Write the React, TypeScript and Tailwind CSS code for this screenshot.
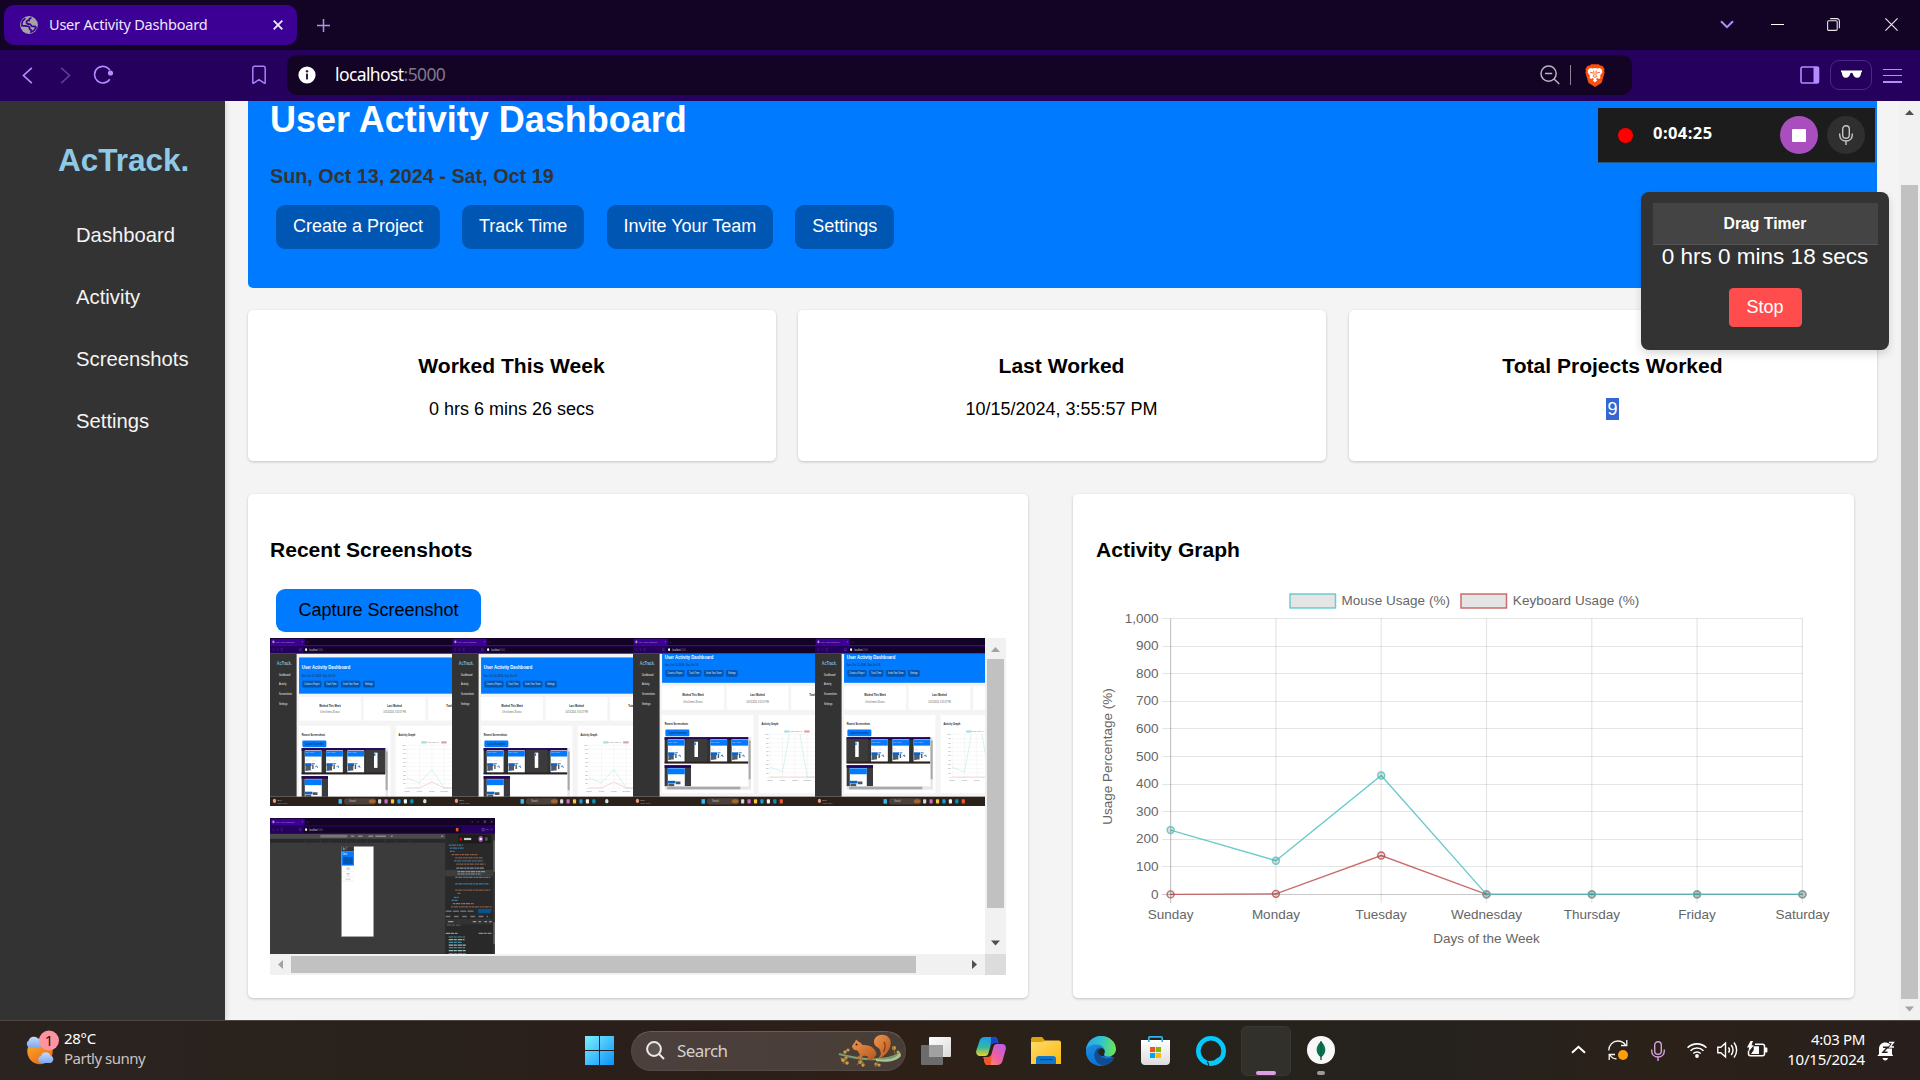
import React from "react";

const ui = "font-['Noto_Sans','Open_Sans',sans-serif]";

/* ---------- Browser chrome ---------- */

function TabStrip() {
  return (
    <div className="flex h-[50px] items-center bg-[#130425] pl-1">
      <div className="flex h-10 w-[293px] items-center rounded-[10px] bg-[#3d0095] pl-4 pr-[14px]">
        <svg width="18" height="18" viewBox="0 0 18 18">
          <circle cx="9" cy="9" r="8.900" fill="#a3a3a6" />
          <path d="M11.500 2.200C9.500 2 8.800 3.400 9 4.500c-1.500-.3-2.800.7-2.500 2 .3 1.500 1.500 1.600 3 1.600 1 0 1.500.6 1.700 1.500.3 1 1.300 1 2.300.8 1.200-.2 2 .1 2.600.8-.8 2.200-2.500 4-5 4.700.4-1.600-.1-2.600-1.400-2.800.2-1.900-.8-2.900-2.500-3L2 9.600C1.500 6.500 3 3.700 5.500 2.500" fill="none" stroke="#3d0095" strokeWidth="1.700" />
        </svg>
        <span className={`${ui} -mt-[2px] ml-[11px] text-[14.5px] leading-5 tracking-[-0.21px] text-[#efe6ff] whitespace-nowrap`}>User Activity Dashboard</span>
        <svg className="ml-auto" width="10" height="10" viewBox="0 0 10 10" stroke="#f1eaff" strokeWidth="1.800">
          <path d="M.7.7l8.600 8.600M9.300.7L.7 9.300" />
        </svg>
      </div>
      <svg className="ml-5" width="13" height="13" viewBox="0 0 13 13" stroke="#b294e6" strokeWidth="1.500">
        <path d="M6.500 0v13M0 6.500h13" />
      </svg>
      <div className="-mt-px ml-auto flex items-center pr-[22px]">
        <svg width="14" height="9" viewBox="0 0 14 9" fill="none" stroke="#b38cff" strokeWidth="2">
          <path d="M1 1.200l6 6 6-6" />
        </svg>
        <div className="ml-[37px] h-px w-[13px] bg-white" />
        <svg className="ml-[43px]" width="13" height="13" viewBox="0 0 13 13" fill="none" stroke="#e8e4ec" strokeWidth="1.100">
          <rect x=".6" y="2.800" width="9.600" height="9.600" rx="1.200" />
          <path d="M3 .9C3.300.6 3.600.6 4 .6h6a2.400 2.400 0 0 1 2.400 2.400v6.200c0 .4 0 .6-.4 1" />
        </svg>
        <svg className="ml-[45px]" width="13" height="13" viewBox="0 0 13 13" stroke="#e8e4ec" strokeWidth="1.200">
          <path d="M.4.4l12.200 12.200M12.600.4L.4 12.600" />
        </svg>
      </div>
    </div>
  );
}

function BraveLion() {
  return (
    <svg width="20" height="23" viewBox="0 0 20 23">
      <path d="M5 1.500L6.200.3h7.600L15 1.500l2.300.2L19.600 5l-.5 2 .5 1.500-2.500 8.700c-.4 1.400-1 2-2.300 2.900L10 23l-4.800-2.900c-1.300-.9-1.900-1.500-2.300-2.900L.4 8.500.9 7 .4 5l2.300-3.300z" fill="#fb4f0a" />
      <path d="M3 5.800L5.200 4l2.300.6L10 4.100l2.500.5 2.300-.6L17 5.800l.3 2.400-2.200 3.400.4 2-1.300 1.400-2.300-1-.6 1.700.9.800L10 18.400l-2.200-1.900.9-.8-.6-1.700-2.300 1-1.300-1.400.4-2L2.700 8.200z" fill="#fff" />
      <path d="M5 8.200l3 .8M15 8.200l-3 .8M8.700 6.500l.4 4.500-.9 1.500L10 13.400l1.800-.9-.9-1.500.4-4.500" fill="none" stroke="#fb4f0a" strokeWidth=".9" />
    </svg>
  );
}

function Toolbar() {
  return (
    <div className="flex h-[51px] items-center bg-[#25005c] pl-[22px] pr-[18px]">
      <svg className="-mt-px" width="11" height="17" viewBox="0 0 11 17" fill="none" stroke="#b38cff" strokeWidth="1.700"><path d="M9.800.8L1.500 8.500l8.300 7.700" /></svg>
      <svg className="-mt-px ml-[27px]" width="11" height="17" viewBox="0 0 11 17" fill="none" stroke="#5f3a99" strokeWidth="1.700"><path d="M1.200.8l8.300 7.700-8.300 7.700" /></svg>
      <svg className="-mt-[2px] ml-[22px]" width="21" height="20" viewBox="0 0 21 20">
        <path d="M16.800 14.200A8.300 8.300 0 1 1 17 5.400" fill="none" stroke="#b38cff" strokeWidth="1.600" />
        <circle cx="17.500" cy="8" r="2.600" fill="#b38cff" />
      </svg>
      <svg className="-mt-[2px] ml-[137px]" width="16" height="20" viewBox="0 0 16 20" fill="none" stroke="#a883f5" strokeWidth="1.500"><path d="M1.800 17.800V3c0-1 .7-1.700 1.700-1.700h9c1 0 1.700.7 1.700 1.700v14.800c0 .5-.5.7-.9.4L8 14.600l-5.300 3.600c-.4.300-.9.100-.9-.4z" /></svg>
      <div className="-mt-px ml-[20px] flex h-10 w-[1345px] items-center rounded-[10px] bg-[#130425] pl-[11px] pr-[27px]">
        <svg width="18" height="18" viewBox="0 0 18 18"><circle cx="9" cy="9" r="8.600" fill="#fff" /><circle cx="9" cy="5.300" r="1.200" fill="#2c2140" /><rect x="8" y="7.600" width="2" height="5.800" fill="#2c2140" /></svg>
        <span className={`${ui} -mt-[3px] ml-[19px] text-[17.5px] leading-6 tracking-[-0.6px] text-white`}>localhost<span className="text-[#7f788c]">:5000</span></span>
        <svg className="-mt-px ml-auto" width="20" height="20" viewBox="0 0 20 20" fill="none" stroke="#b9b4c0" strokeWidth="1.500"><circle cx="8.600" cy="8.600" r="7.600" /><path d="M5 8.600h7.200M14 14l5.300 5" /></svg>
        <div className="ml-[10px] h-5 w-px bg-[#8a8496]" />
        <div className="ml-[14px]"><BraveLion /></div>
      </div>
      <svg className="-mt-px ml-auto" width="20" height="18" viewBox="0 0 20 18"><rect x="1" y="1" width="17.500" height="16" rx="1.500" fill="none" stroke="#b38cff" strokeWidth="1.600" /><rect x="13.500" y="1" width="5.500" height="16" fill="#b38cff" /></svg>
      <div className="-mt-px ml-[10px] flex h-[30px] w-[42px] items-center justify-center rounded-[9px] border border-[#4b2a86]">
        <svg className="-mt-px" width="21" height="9" viewBox="0 0 21 9" fill="#fff"><path d="M0 .4h21v1.800h-.8c-.2 3.500-1.300 5.600-4 5.600-2.600 0-3.800-1.800-4.600-4.600-.2-.7-2-.7-2.200 0C8.600 6 7.400 7.800 4.800 7.800c-2.700 0-3.800-2.100-4-5.600H0z" /></svg>
      </div>
      <div className="ml-[11px] flex h-[14px] w-[19px] flex-col justify-between"><i className="h-[1.5px] bg-[#b38cff]" /><i className="h-[1.5px] bg-[#b38cff]" /><i className="h-[1.5px] bg-[#b38cff]" /></div>
    </div>
  );
}

/* ---------- Chart ---------- */

const days = ["Sunday", "Monday", "Tuesday", "Wednesday", "Thursday", "Friday", "Saturday"];
const mouse = [233, 122, 431, 0, 0, 0, 0];
const keys = [0, 2, 141, 0, 0, 0, 0];
const px = (i: number) => 1170.6 + i * 105.3;
const py = (v: number) => 894.4 - v * 0.276;
const points = (d: number[]) => d.map((v, i) => `${px(i)},${py(v)}`).join(" ");

function ActivityChart() {
  const ticks = [0, 100, 200, 300, 400, 500, 600, 700, 800, 900, 1000];
  return (
    <svg width="736" height="375" viewBox="1096 585 736 375" fontFamily="Liberation Sans, Arial, sans-serif" fontSize="13.5" fill="#666">
      {ticks.map((t) => (
        <g key={t}>
          <path d={`M1162 ${Math.floor(py(t)) + 0.5}H1802.500`} stroke="#000" strokeOpacity={t === 0 ? 0.22 : 0.1} strokeWidth="1.200" />
          <text x="1158.500" y={py(t) + 4.1} textAnchor="end">{t.toLocaleString("en-US")}</text>
        </g>
      ))}
      {days.map((d, i) => (
        <g key={d}>
          <path d={`M${px(i)} 618.500V903`} stroke="#000" strokeOpacity={i === 0 ? 0.22 : 0.1} strokeWidth="1.200" />
          <text x={px(i)} y="918.500" textAnchor="middle">{d}</text>
        </g>
      ))}
      {[{ d: keys, c: "#c04b4b" }, { d: mouse, c: "#4bc0c0" }].map(({ d, c }) => (
        <g key={c} stroke={c} strokeWidth="1.400" strokeOpacity=".82" fill="none">
          <polyline points={points(d)} />
          {d.map((v, i) => <circle key={i} cx={px(i)} cy={py(v)} r="3.500" fill="#000" fillOpacity=".12" />)}
        </g>
      ))}
      <rect x="1290" y="594" width="45.500" height="14" fill="#e5e5e5" stroke="#4bc0c0" strokeOpacity=".8" strokeWidth="1.500" />
      <text x="1341.500" y="605" textLength="108.500">Mouse Usage (%)</text>
      <rect x="1461" y="594" width="45.500" height="14" fill="#e5e5e5" stroke="#c04b4b" strokeOpacity=".8" strokeWidth="1.500" />
      <text x="1512.800" y="605" textLength="126.500">Keyboard Usage (%)</text>
      <text x="1486.500" y="942.500" textAnchor="middle">Days of the Week</text>
      <text transform="translate(1112 756.500) rotate(-90)" textAnchor="middle">Usage Percentage (%)</text>
    </svg>
  );
}

/* ---------- Captured screenshot thumbnails ---------- */

function ThumbChrome() {
  return (
    <g>
      <rect width="1920" height="50" fill="#130425" />
      <rect y="48" width="1920" height="53" fill="#25005c" />
      <rect x="4" y="5" width="293" height="42" rx="8" fill="#3d0095" />
      <rect x="288" y="56" width="1345" height="39" rx="8" fill="#130425" />
      <circle cx="29" cy="25" r="9" fill="#a3a3a6" />
      <text x="49" y="31" fontSize="16" fill="#c9b5ee" opacity=".75" textLength="158">User Activity Dashboard</text>
      <text x="272" y="31" fontSize="18" fill="#ddd" opacity=".8">×</text>
      <text x="316" y="32" fontSize="20" fill="#a58bd0" opacity=".7">+</text>
      <path d="M31 66l-7 9 7 9M60 66l7 9-7 9M109 68a9 9 0 1 0 0 14M253 66h12v18l-6-5-6 5z" fill="none" stroke="#8660cc" strokeWidth="2" />
      <circle cx="308" cy="75" r="9" fill="#fff" />
      <text x="336" y="81" fontSize="18" fill="#ddd">localhost<tspan fill="#776a8a">:5000</tspan></text>
    </g>
  );
}

function ThumbTaskbar({ extra }: { extra: string }) {
  const icons = ["#d8d8d8", "#c86bc8", "#f8c43a", "#1c9bd8", "#f2f2f2", "#0b91ac", extra];
  return (
    <g>
      <rect y="1020" width="1920" height="60" fill="#2a211b" />
      <circle cx="38" cy="1047" r="14" fill="#eb9a83" />
      <text x="64" y="1046" fontSize="16" fill="#ccc">28°C</text>
      <text x="64" y="1066" fontSize="16" fill="#999">Partly sunny</text>
      <rect x="585" y="1036" width="29" height="29" fill="#38bdf8" />
      <rect x="631" y="1030" width="275" height="40" rx="20" fill="#4b403a" />
      <text x="677" y="1056" fontSize="18" fill="#ccc">Search</text>
      <ellipse cx="872" cy="1050" rx="29" ry="13" fill="#a7652e" />
      {icons.map((c, i) => <rect key={i} x={922 + i * 55} y="1037" width="27" height="27" rx="6" fill={c} />)}
      {extra === "#2a211b" && <circle cx="1321" cy="1049" r="14" fill="#d5e5df" />}
    </g>
  );
}

type Cell = "dash" | "dark";

function MiniGallery({ cells }: { cells: Cell[] }) {
  return (
    <g>
      <rect x="270" y="638" width="715" height="168" fill="#333" />
      <rect x="270" y="638" width="715" height="16" fill="#25005c" />
      {cells.map((c, i) =>
        c === "dash" ? (
          <g key={i} transform={`translate(${270 + i * 181.5} 0)`}>
            <rect x="27" y="652" width="143" height="143" fill="#fff" />
            <rect x="27" y="656" width="143" height="36" fill="#007bff" />
            <text x="31" y="672" fontSize="14" fill="#fff" opacity=".7">User Activity</text>
            <rect x="30" y="735" width="54" height="18" fill="#0864c8" />
            <path d="M32 752h46v29h-46zM90 744h12v28h-12z" fill="#515966" />
            <path d="M30 780h24M88 738h25M116 760l12-9 8 14" stroke="#0864c8" strokeWidth="6" fill="none" />
            <path d="M33 719h34M88 719h36M33 712h24" stroke="#ddd" strokeWidth="4" />
          </g>
        ) : (
          <g key={i}>
            <rect x={270 + i * 181.5} y="648" width="181.5" height="148" fill="#3b3b3b" />
            <rect x={343 + i * 181.5} y="667" width="30" height="98" fill="#fff" />
            <rect x={343 + i * 181.5} y="672" width="12" height="16" fill="#007bff" />
          </g>
        )
      )}
      <rect x="270" y="795" width="715" height="11" fill="#2a211b" />
      <rect x="270" y="818" width="225" height="136" fill="#3a3b40" />
      <rect x="270" y="818" width="225" height="16" fill="#25005c" />
      <rect x="297" y="836" width="145" height="118" fill="#fff" />
      <rect x="297" y="838" width="145" height="38" fill="#007bff" />
      <rect x="298" y="918" width="64" height="16" fill="#0864c8" />
      <path d="M302 936h50v18h-50zM365 922h40v18h-40z" fill="#4c5868" />
      <rect x="985" y="638" width="21" height="337" fill="#e7e7e7" />
      <rect x="987" y="659" width="17" height="249" fill="#a9a9a9" />
      <rect x="270" y="954" width="715" height="21" fill="#e7e7e7" />
      <rect x="291" y="956" width="625" height="17" fill="#a9a9a9" />
    </g>
  );
}

function DashboardThumb({ shift, cells, peak, extra }: { shift: number; cells: Cell[]; peak: boolean; extra: string }) {
  const top = [233, 122, 1700, 0, 0, 0, 0];
  const id = `page-${shift}-${cells.join("")}`;
  const buttons: [number, number, string][] = [[276, 163, "Create a Project"], [461, 122, "Track Time"], [605, 167, "Invite Your Team"], [794, 99, "Settings"]];
  return (
    <svg className="block h-[168px] w-[225px] max-w-none shrink-0" viewBox="0 0 1920 1080" preserveAspectRatio="none" fontFamily="Liberation Sans, Arial, sans-serif">
      <defs>
        <clipPath id={id}><rect y="101" width="1920" height="919" /></clipPath>
        <clipPath id={`${id}-plot`}><rect x="1160" y="617" width="660" height="290" /></clipPath>
      </defs>
      <rect width="1920" height="1080" fill="#f4f4f4" />
      <rect y="101" width="227" height="919" fill="#333" />
      <text x="58" y="171" fontSize="31" fontWeight="bold" fill="#8ecae6" opacity=".85">AcTrack.</text>
      {["Dashboard", "Activity", "Screenshots", "Settings"].map((t, i) => <text key={t} x="76" y={242 + i * 62} fontSize="20" fill="#eee">{t}</text>)}
      <g clipPath={`url(#${id})`}>
        <g transform={`translate(0 ${shift})`}>
          <rect x="248" y="55" width="1672" height="233" fill="#007bff" />
          <text x="270" y="132" fontSize="36" fontWeight="bold" fill="#fff">User Activity Dashboard</text>
          <text x="270" y="183" fontSize="20" fontWeight="bold" fill="#234" opacity=".8">Sun, Oct 13, 2024 - Sat, Oct 19</text>
          {buttons.map(([x, w, t]) => (
            <g key={t}>
              <rect x={x} y="205" width={w} height="44" rx="9" fill="#0056b3" />
              <text x={x + w / 2} y="232" fontSize="18" textAnchor="middle" fill="#fff" opacity=".85">{t}</text>
            </g>
          ))}
          {[["Worked This Week", "0 hrs 6 mins 26 secs"], ["Last Worked", "10/15/2024, 3:55:57 PM"], ["Total Projects Worked", "9"]].map(([a, b], i) => (
            <g key={a} textAnchor="middle">
              <rect x={248 + i * 550.5} y="310" width="528" height="151" fill="#fff" />
              <text x={512 + i * 550.5} y="373" fontSize="21" fontWeight="bold" fill="#222">{a}</text>
              <text x={512 + i * 550.5} y="415" fontSize="18" fill="#555">{b}</text>
            </g>
          ))}
          <rect x="248" y="494" width="780" height="504" fill="#fff" />
          <rect x="1073" y="494" width="781" height="504" fill="#fff" />
          <text x="270" y="557" fontSize="21" fontWeight="bold" fill="#222">Recent Screenshots</text>
          <text x="1096" y="557" fontSize="21" fontWeight="bold" fill="#222">Activity Graph</text>
          <rect x="276" y="589" width="205" height="43" rx="9" fill="#007bff" />
          <text x="299" y="616" fontSize="18" fill="#123">Capture Screenshot</text>
          <MiniGallery cells={cells} />
          <path d={Array.from({ length: 11 }, (_, i) => `M1162 ${py(i * 100)}H1802`).join("") + days.map((_, i) => `M${px(i)} 618V903`).join("")} stroke="#dcdcdc" strokeWidth="1.500" />
          {days.map((d, i) => <text key={d} x={px(i)} y="919" fontSize="13" textAnchor="middle" fill="#777">{d}</text>)}
          {Array.from({ length: 11 }, (_, i) => <text key={i} x="1158" y={py(i * 100) + 5} fontSize="13" textAnchor="end" fill="#777">{i * 100}</text>)}
          <g clipPath={`url(#${id}-plot)`} fill="none" strokeWidth="3">
            <polyline points={points(peak ? keys : [0, 0, 0, 0, 0, 0, 0])} stroke="#e3a0a0" />
            <polyline points={points(peak ? mouse : top)} stroke="#a2dede" />
          </g>
          <rect x="1290" y="594" width="46" height="14" fill="#a4dede" />
          <rect x="1461" y="594" width="46" height="14" fill="#dfa0a0" />
          <text x="1341" y="606" fontSize="13" fill="#777">Mouse Usage (%)</text>
        </g>
      </g>
      <ThumbChrome />
      <ThumbTaskbar extra={extra} />
    </svg>
  );
}

function DevtoolsThumb() {
  const rows: [number, number, number, string][] = [
    [218, 1525, 120, "#3f77a8"], [242, 1535, 120, "#3f77a8"], [268, 1535, 40, "#3f77a8"], [295, 1550, 220, "#8c5a45"], [320, 1580, 240, "#8c5a45"], [345, 1570, 250, "#4a6f90"],
    [370, 1590, 250, "#8c5a45"], [402, 1590, 240, "#7890a5"], [430, 1600, 240, "#8a8f99"], [450, 1600, 200, "#8a8f99"], [477, 1580, 300, "#4a78a0"], [530, 1580, 290, "#3f77a8"],
    [580, 1580, 300, "#8c5a45"], [605, 1600, 30, "#3f77a8"], [637, 1570, 40, "#3f77a8"], [662, 1550, 50, "#3f77a8"], [688, 1560, 180, "#777"], [714, 1545, 350, "#8c5a45"],
    [740, 1780, 110, "#2f80c0"],
  ];
  const styles: [number, number, number, string][] = [
    [832, 1510, 120, "#555"], [884, 1500, 100, "#999"], [884, 1780, 110, "#888"], [908, 1525, 140, "#35919e"], [925, 1525, 135, "#a0a8aa"],
    [943, 1525, 110, "#35919e"], [960, 1525, 150, "#99bbbb"], [977, 1525, 140, "#35919e"], [995, 1525, 150, "#99bbbb"], [1015, 1525, 150, "#35919e"], [1034, 1525, 150, "#35919e"],
  ];
  return (
    <svg className="block h-[168px] w-[225px] max-w-none shrink-0" viewBox="0 0 1920 1080" preserveAspectRatio="none" fontFamily="Liberation Sans, Arial, sans-serif">
      <rect width="1920" height="1080" fill="#3b3b3b" />
      <rect y="101" width="1495" height="33" fill="#4a4a4a" />
      <rect y="134" width="1495" height="25" fill="#292929" />
      <rect x="430" y="108" width="230" height="18" fill="#777" />
      <path d="M690 117h30M750 117h40M840 117h40M900 117h90M1030 117h18M1460 117h18" stroke="#888" strokeWidth="9" />
      <path d="M300 134v25M430 134v25M510 134v25M610 134v25M650 134v25M740 134v25M830 134v25M980 134v25M1070 134v25M1195 134v25" stroke="#484848" strokeWidth="3" />
      <rect x="611" y="184" width="272" height="578" fill="#fff" stroke="#aaa" strokeWidth="4" />
      <rect x="609" y="181" width="107" height="32" fill="#333" />
      <text x="620" y="206" fontSize="22" fill="#8ecae6">AcT</text>
      <rect x="612" y="213" width="104" height="93" fill="#007bff" />
      <text x="618" y="240" fontSize="20" fill="#fff">User</text>
      <rect x="624" y="250" width="82" height="48" fill="#0056b3" />
      <path d="M650 322h34M655 330h24M652 357h30M655 367h22M645 393h44" stroke="#777" strokeWidth="3" />
      <path d="M615 342h100M615 378h100M615 406h100" stroke="#ddd" strokeWidth="3" />
      <rect x="1495" y="101" width="425" height="979" fill="#292929" />
      <rect x="1495" y="333" width="410" height="42" fill="#3d3d3d" />
      {rows.map(([y, x, w, c], i) => <path key={i} d={`M${x} ${y * 0.8}h${w}`} stroke={c} strokeWidth="8" strokeDasharray="22 5 34 7 15 4" />)}
      <path d="M1500 600h240" stroke="#5f6f80" strokeWidth="10" strokeDasharray="50 12" />
      <rect x="1775" y="586" width="110" height="26" fill="#08548c" />
      <path d="M1500 633h360" stroke="#777" strokeWidth="9" strokeDasharray="40 30" />
      <rect x="1500" y="648" width="400" height="36" fill="#333" />
      <path d="M1520 666h45M1730 666h30M1780 666h20M1830 666h22M1870 666h22" stroke="#999" strokeWidth="9" />
      {styles.map(([y, x, w, c], i) => <path key={i} d={`M${x} ${y - 143}h${w}`} stroke={c} strokeWidth="8" strokeDasharray="40 5 24 7" />)}
      <rect x="1608" y="108" width="277" height="54" fill="#1c1c1c" />
      <circle cx="1628" cy="135" r="10" fill="red" />
      <rect x="1655" y="128" width="62" height="14" fill="#ccc" />
      <circle cx="1798" cy="135" r="19" fill="#a94ebf" /><rect x="1789" y="128" width="18" height="14" fill="#fff" />
      <circle cx="1846" cy="135" r="13" fill="#555" />
      <rect x="1906" y="101" width="14" height="979" fill="#3a3a3a" />
      <rect x="1906" y="145" width="14" height="200" fill="#666" />
      <rect x="1906" y="670" width="14" height="140" fill="#666" />
      <ThumbChrome />
      <path d="M1720 25h12M1771 25h13M1827 18h12v12h-12zM1885 18l12 12m0-12l-12 12M1810 67h18v16h-18zM1840 75h26M1883 75h15" stroke="#8660cc" strokeWidth="4" fill="none" />
      <rect x="1586" y="64" width="22" height="22" fill="#e85b29" />
    </svg>
  );
}

/* ---------- Page ---------- */

function Arrow({ dir, muted }: { dir: "up" | "down" | "left" | "right"; muted?: boolean }) {
  const d = { up: "M6 14l4.500-5 4.500 5z", down: "M6 7.500l4.500 5 4.500-5z", left: "M13 6L8 10.500l5 4.500z", right: "M8 6l5 4.500L8 15z" }[dir];
  return <svg className="block shrink-0" width="21" height="21" viewBox="0 0 21 21" fill={muted ? "#a3a3a3" : "#505050"}><path d={d} /></svg>;
}

function Sidebar() {
  return (
    <aside className="z-10 w-[225px] shrink-0 bg-[#333] shadow-[2px_0_5px_rgba(0,0,0,0.1)]">
      <div className="mt-[41px] pl-[58px] text-[31.5px] leading-9 font-bold text-[#8ecae6]">AcTrack.</div>
      <nav className="mt-[26px] flex flex-col pl-[76px] text-[20.25px] text-[#f4f4f4]">
        <a className="flex h-[62px] items-center">Dashboard</a>
        <a className="flex h-[62px] items-center">Activity</a>
        <a className="flex h-[62px] items-center">Screenshots</a>
        <a className="flex h-[63px] items-center">Settings</a>
      </nav>
    </aside>
  );
}

function HeaderButton({ children }: { children: React.ReactNode }) {
  return <button className="h-[44px] rounded-[9px] bg-[#0056b3] px-[16.9px] pb-[3px] text-[18px] leading-5 whitespace-nowrap text-white">{children}</button>;
}

function StatCard({ title, children }: { title: string; children: React.ReactNode }) {
  return (
    <div className="h-[151px] w-[528px] rounded-[5px] bg-white pt-[44px] pr-px text-center shadow-[0_1px_3px_rgba(0,0,0,0.2)]">
      <h3 className="text-[21.06px] leading-6 font-bold">{title}</h3>
      <p className="mt-[21px] text-[18px] leading-5">{children}</p>
    </div>
  );
}

function Gallery() {
  return (
    <div className="mt-[6px] grid w-[736px] grid-cols-[715px_21px] grid-rows-[316px_21px]">
      <div className="overflow-hidden">
        <div className="flex">
          <div className="w-[182px] shrink-0 overflow-hidden"><DashboardThumb shift={70} cells={["dash", "dash", "dash", "dark"]} peak extra="#2a211b" /></div>
          <div className="w-[181px] shrink-0 overflow-hidden"><DashboardThumb shift={70} cells={["dash", "dash", "dark", "dash"]} peak extra="#2a211b" /></div>
          <div className="w-[182px] shrink-0 overflow-hidden"><DashboardThumb shift={0} cells={["dash", "dark", "dash", "dash"]} peak={false} extra="#ee5730" /></div>
          <div className="w-[170px] shrink-0 overflow-hidden"><DashboardThumb shift={0} cells={["dark", "dash", "dash", "dash"]} peak={false} extra="#ee5730" /></div>
        </div>
        <div className="mt-3"><DevtoolsThumb /></div>
      </div>
      <div className="flex flex-col items-center bg-[#f1f1f1]">
        <Arrow dir="up" muted />
        <div className="h-[249px] w-[17px] bg-[#c1c1c1]" />
        <div className="mt-auto"><Arrow dir="down" /></div>
      </div>
      <div className="flex items-center bg-[#f1f1f1]">
        <Arrow dir="left" muted />
        <div className="h-[17px] w-[625px] bg-[#c1c1c1]" />
        <div className="ml-auto"><Arrow dir="right" /></div>
      </div>
      <div className="bg-[#dcdcdc]" />
    </div>
  );
}

function Page() {
  return (
    <div className="flex h-[919px] overflow-hidden bg-[#f4f4f4] text-black">
      <Sidebar />
      <main className="flex w-[1674px] shrink-0 flex-col pl-[23px]">
        <header className="h-[187px] w-[1629px] rounded-b-[5px] bg-[#007bff] pt-px pl-[22px]">
          <h1 className="text-[36px] leading-9 font-bold text-white">User Activity Dashboard</h1>
          <p className="mt-[26px] text-[19.8px] leading-6 font-bold text-[#333]">Sun, Oct 13, 2024 - Sat, Oct 19</p>
          <div className="mt-[17px] ml-[6px] flex gap-[22.3px]">
            <HeaderButton>Create a Project</HeaderButton>
            <HeaderButton>Track Time</HeaderButton>
            <HeaderButton>Invite Your Team</HeaderButton>
            <HeaderButton>Settings</HeaderButton>
          </div>
        </header>
        <section className="mt-[22px] flex w-[1629px] gap-[22px]">
          <StatCard title="Worked This Week">0 hrs 6 mins 26 secs</StatCard>
          <StatCard title="Last Worked">10/15/2024, 3:55:57 PM</StatCard>
          <div className="ml-px"><StatCard title="Total Projects Worked"><span className="bg-[#3367d1] px-px py-px text-white">9</span></StatCard></div>
        </section>
        <section className="mt-[33px] flex gap-[45px]">
          <div className="h-[504px] w-[780px] rounded-[5px] bg-white pt-[44px] pl-[22px] shadow-[0_1px_3px_rgba(0,0,0,0.2)]">
            <h3 className="text-[21.06px] leading-6 font-bold">Recent Screenshots</h3>
            <button className="mt-[27px] ml-[6px] block h-[43px] w-[205px] rounded-[9px] bg-[#007bff] pb-px text-[18px] leading-5">Capture Screenshot</button>
            <Gallery />
          </div>
          <div className="h-[504px] w-[781px] rounded-[5px] bg-white pt-[44px] pl-[23px] shadow-[0_1px_3px_rgba(0,0,0,0.2)]">
            <h3 className="mb-[23px] text-[21.06px] leading-6 font-bold">Activity Graph</h3>
            <ActivityChart />
          </div>
        </section>
      </main>
      <div className="flex w-[21px] shrink-0 flex-col items-center bg-[#f1f1f1]">
        <Arrow dir="up" />
        <div className="mt-[63px] h-[814px] w-[17px] bg-[#c1c1c1]" />
        <div className="mt-auto"><Arrow dir="down" muted /></div>
      </div>
    </div>
  );
}

function MicIcon({ color, width, height }: { color: string; width: number; height: number }) {
  return (
    <svg width={width} height={height} viewBox="0 0 14 20" fill="none" stroke={color} strokeWidth="1.400">
      <rect x="3.700" y=".8" width="6.600" height="12.400" rx="3.300" />
      <path d="M.7 8.500v1.200c0 3.800 2.600 6.300 6.300 6.300s6.300-2.500 6.300-6.300V8.500M7 16v4" />
    </svg>
  );
}

function Recorder() {
  return (
    <div className="absolute top-[108px] left-[1598px] z-20 flex h-[55px] w-[277px] items-center border-b border-[#27557f] bg-[#1c1c1c] pl-[20px]">
      <div className="h-[15px] w-[15px] rounded-full bg-[#f00]" />
      <span className={`${ui} -mt-[3px] ml-[20px] w-[62px] text-[16.5px] tracking-[0.45px] font-bold text-white`}>0:04:25</span>
      <div className="ml-[65px] flex h-[38px] w-[38px] items-center justify-center rounded-full bg-[#a94ebf]"><div className="h-[13px] w-[14px] rounded-[1px] bg-white" /></div>
      <div className="ml-[9px] flex h-[38px] w-[38px] items-center justify-center rounded-full bg-[#2f2f2f]"><MicIcon color="#c9c9c9" width={14} height={20} /></div>
    </div>
  );
}

function DragTimer() {
  return (
    <div className="absolute top-[192px] left-[1641px] z-20 flex h-[158px] w-[248px] flex-col items-center rounded-[8px] bg-[#333] pt-[11px] text-white shadow-[0_4px_9px_rgba(0,0,0,0.15)]">
      <div className="flex h-[42px] w-[225px] items-center justify-center border-b border-[#555] bg-[#444] text-[15.75px] leading-5 font-bold">Drag Timer</div>
      <div className="text-[22.5px] leading-6 whitespace-nowrap">0 hrs 0 mins 18 secs</div>
      <button className="mt-[19px] h-[39px] w-[73px] rounded-[4.5px] bg-[#ff4d4d] pb-[2px] text-[18px] leading-5">Stop</button>
    </div>
  );
}

/* ---------- Taskbar ---------- */

function Squirrel() {
  return (
    <svg width="64" height="34" viewBox="0 0 64 34">
      <defs><linearGradient id="fur" x1="0" y1="0" x2="1" y2="1"><stop offset="0" stopColor="#f0964e" /><stop offset="1" stopColor="#b4561d" /></linearGradient></defs>
      <path d="M1 20c14 4 24 6 38 5 9-.5 15-1 23-6" fill="none" stroke="#7f9a6c" strokeWidth="2" />
      <path d="M38 25c10 1 20 0 24-7l1 4c-4 5-14 7-25 5z" fill="#a8c493" />
      <g fill="#c9a044"><circle cx="7" cy="18" r="1.700" /><circle cx="10" cy="16" r="1.600" /><circle cx="5" cy="26" r="2" /><circle cx="9" cy="29" r="1.800" /><circle cx="8" cy="24" r="1.600" /><circle cx="22" cy="28" r="2" /><circle cx="25" cy="31" r="1.700" /><circle cx="38" cy="30" r="1.600" /><circle cx="41" cy="31" r="1.600" /><circle cx="56" cy="14" r="2" /><circle cx="60" cy="18" r="1.500" /></g>
      <path d="M2 24l6 1M5 30l4-6M19 31l4-6 4 7M37 33l3-6M55 12l2 8" stroke="#a0702c" strokeWidth="1" fill="none" />
      <path d="M37 25c5-1 7-4 5-9-1-3-6-3-6-8C36 3 41 0 46 1c6 1 8 7 6 12-2 6-8 12-15 12z" fill="url(#fur)" />
      <path d="M46 8c2 3 1 7-.5 10" stroke="#8c3c12" strokeWidth="1.300" fill="none" />
      <path d="M14 12.500c.5-2 2-3 3-4.500l1-2.500 2.300 2c2 .8 3.200 2 4.200 3.500 6 0 9 1 11.500 4 3 3.500 3 6 1 7.500l-3 3.500h-5l1-3.500-4-1-4 3-3 .5v-1.500l3-2.500-2.500-4.500c-3 0-5-1.500-5.500-4z" fill="url(#fur)" />
      <circle cx="18.500" cy="10.500" r="1" fill="#3a1b0a" />
    </svg>
  );
}

function Taskbar() {
  return (
    <footer className={`${ui} flex h-[60px] items-center border-t border-[#4b4844] bg-[linear-gradient(90deg,#2b2320_0%,#29221c_20%,#2b1e1b_35%,#2e2017_47%,#27221b_58%,#25221e_75%,#2b2119_87%,#281f1d_100%)] text-[15px] leading-5 text-white`}>
      <svg className="ml-[25px] -mt-[8px]" width="34" height="36" viewBox="0 0 34 36">
        <defs>
          <linearGradient id="sun" x1="0" y1="0" x2=".6" y2="1"><stop offset="0" stopColor="#f7b733" /><stop offset="1" stopColor="#ef6a17" /></linearGradient>
          <linearGradient id="cloud" x1="0" y1="0" x2="0" y2="1"><stop offset="0" stopColor="#c3dbfb" /><stop offset="1" stopColor="#7fa9ee" /></linearGradient>
        </defs>
        <circle cx="15" cy="22.500" r="12.700" fill="url(#sun)" />
        <path d="M4 18.500a4 4 0 0 1-.3-7A5.500 5.500 0 0 1 13 9.500a4.500 4.500 0 0 1 0 9z" fill="url(#cloud)" />
        <path d="M16 34a3.600 3.600 0 0 1 0-7 5 5 0 0 1 9.500-.5 4 4 0 0 1 .5 7.500z" fill="url(#cloud)" />
        <circle cx="24" cy="11.500" r="10" fill="#ff94a0" />
        <text x="24" y="17" fontSize="15" textAnchor="middle" fill="#30131a">1</text>
      </svg>
      <div className="-mt-[5px] ml-[5px] w-[100px] whitespace-nowrap">
        <div className="tracking-[-0.3px]">28°C</div>
        <div className="tracking-[-0.5px] text-[#c9c4c0]">Partly sunny</div>
      </div>

      <svg className="ml-[421px]" width="29" height="29" viewBox="0 0 29 29">
        <defs><linearGradient id="win" x1="0" y1="0" x2="1" y2="1"><stop offset="0" stopColor="#7cf0fd" /><stop offset="1" stopColor="#0c92fb" /></linearGradient></defs>
        <path d="M0 0h14v14H0zM15 0h14v14H15zM0 15h14v14H0zM15 15h14v14H15z" fill="url(#win)" />
      </svg>
      <div className="ml-[17px] flex h-10 w-[275px] items-center rounded-full border border-[#564a44] border-t-[#6b5d56] bg-[linear-gradient(90deg,#4b403d,#493d37)] pl-[14px] pr-[3px]">
        <svg width="19" height="19" viewBox="0 0 19 19" fill="#5e5450" stroke="#eceae9" strokeWidth="2"><circle cx="8" cy="8" r="6.900" /><path d="M13 13l5 5" /></svg>
        <span className="ml-[12px] text-[17px] tracking-[-0.55px] text-[#d5d0cd]">Search</span>
        <div className="ml-auto"><Squirrel /></div>
      </div>
      <svg className="ml-[15px]" width="30" height="28" viewBox="0 0 30 28">
        <defs><linearGradient id="tv" x1="0" y1="0" x2="1" y2="1"><stop offset="0" stopColor="#fff" /><stop offset="1" stopColor="#d9d9d9" /></linearGradient></defs>
        <rect x="8" y="0" width="22" height="20" rx="1" fill="url(#tv)" />
        <rect x="0" y="8" width="22" height="20" rx="1" fill="#6c6c6c" />
        <rect x="8" y="8" width="14" height="12" fill="#a0a0a0" />
      </svg>
      <svg className="ml-[25px]" width="30" height="28" viewBox="0 0 30 28">
        <defs>
          <linearGradient id="cpa" x1="0" y1="0" x2="0" y2="1"><stop offset="0" stopColor="#1b9df0" /><stop offset=".55" stopColor="#35b8a0" /><stop offset="1" stopColor="#f4d21f" /></linearGradient>
          <linearGradient id="cpb" x1="1" y1="0" x2="0" y2="1"><stop offset="0" stopColor="#b45cf5" /><stop offset=".55" stopColor="#f0609c" /><stop offset="1" stopColor="#fba04c" /></linearGradient>
        </defs>
        <path d="M9 0h9c2 0 3 1 3.500 3L22.500 6H18c-2 0-3 1-3.500 3l-2 7c-.6 2-1.500 3-3.500 3H4c-3 0-4.500-2.500-3.700-5.500L3.500 4C4.300 1.500 6 0 9 0z" fill="url(#cpa)" />
        <path d="M15 0h3c2 0 3 1 3.500 3L22.500 6H18c-2 0-3 1-3.500 3z" fill="#1747c9" />
        <path d="M21 28h-9c-2 0-3-1-3.500-3L7.500 20H12c2 0 3-1 3.500-3l2-7c.6-2 1.500-3 3.500-3h5c3 0 4.500 2.500 3.700 5.500L26.500 24c-.8 2.500-2.500 4-5.500 4z" fill="url(#cpb)" />
        <path d="M15 28h-3c-2 0-3-1-3.500-3L7.500 20H12c2 0 3-1 3.500-3z" fill="#f1572d" />
      </svg>
      <svg className="ml-[25px]" width="30" height="27" viewBox="0 0 30 27">
        <defs><linearGradient id="fold" x1="0" y1="0" x2="1" y2="1"><stop offset="0" stopColor="#ffdc6b" /><stop offset="1" stopColor="#fbb80f" /></linearGradient></defs>
        <path d="M0 2c0-1 .8-2 2-2h8c1 0 1.500.3 2 1l1.500 2V8H0z" fill="#e0a008" />
        <path d="M0 5h11l3-1.500h14c1 0 2 1 2 2V27H0z" fill="url(#fold)" />
        <path d="M5 27v-5c0-1.700 1-3 3-3h14c2 0 3 1.300 3 3v5z" fill="#0f76cd" />
        <path d="M9 22.500h12.500" stroke="#0a4a8a" strokeWidth="1.200" />
      </svg>
      <svg className="ml-[25px]" width="30" height="30" viewBox="0 0 30 30">
        <defs>
          <linearGradient id="edA" x1="0" y1=".3" x2="1" y2=".4"><stop offset="0" stopColor="#2aa5e8" /><stop offset=".5" stopColor="#30c4cb" /><stop offset="1" stopColor="#6ce555" /></linearGradient>
          <linearGradient id="edB" x1="0" y1="0" x2=".4" y2="1"><stop offset="0" stopColor="#1f97e6" /><stop offset="1" stopColor="#0f6fcf" /></linearGradient>
        </defs>
        <path d="M15 0A15 15 0 1 0 27.800 22.500L20 16 28 8A15 15 0 0 0 15 0z" fill="url(#edB)" />
        <path d="M.3 13C1.500 5.500 7.500 0 15 0c8.500 0 15 6 15 13 0 4.500-3.500 7.500-7.500 7.500-3 0-5-1.200-4.200-2.500C20.500 14.500 17 8.500 10.500 8.500 5.500 8.500 1.500 10.500.3 13z" fill="url(#edA)" />
        <path d="M14 11c-4 1.500-6 5.500-5.500 9.500.5 5 4.500 8.800 9.500 9.200 4-.8 8-3.500 10.200-7.700.3-.7-.3-1.200-1-.8-5.500 2.800-12.700 1.300-14.200-4.200-.5-2-.2-4 1-6z" fill="#114b93" />
        <path d="M15.500 12c2.500.5 3.800 2.500 3 5-.7 1.500-1.200 2.200.5 3.200-3.500.5-6.500-1-6.800-4 0-2 1.200-4 3.300-4.200z" fill="#27231d" />
      </svg>
      <svg className="ml-[25px]" width="29" height="29" viewBox="0 0 29 29">
        <defs><linearGradient id="bag" x1="0" y1="0" x2="0" y2="1"><stop offset="0" stopColor="#fff" /><stop offset="1" stopColor="#dcdcdc" /></linearGradient></defs>
        <path d="M0 4h29v21c0 2.500-1.500 4-4 4H4c-2.500 0-4-1.500-4-4z" fill="url(#bag)" />
        <path d="M7.800 6V2c0-1 .5-1.200 1.200-1.200h11c.7 0 1.200.2 1.200 1.200v4" fill="none" stroke="#28b4ef" strokeWidth="1.700" />
        <path d="M9 11h5.200v5H9z" fill="#f25022" /><path d="M15 11h5v5h-5z" fill="#7fba00" /><path d="M9 17h5.200v5H9z" fill="#00a4ef" /><path d="M15 17h5v5h-5z" fill="#ffb900" />
      </svg>
      <svg className="ml-[26px]" width="30" height="30" viewBox="0 0 30 30">
        <circle cx="15" cy="15" r="12.700" fill="none" stroke="#05c8fb" strokeWidth="4.600" />
        <path d="M12.700 30.500c.3-2-.1-3.500-1.700-4.800" fill="none" stroke="#27231d" strokeWidth="1.200" />
        <path d="M13.500 29.800c-.2-2-.7-3.500-1.500-4.800l6-.5 4.500-3.500.5 3z" fill="#05c8fb" />
      </svg>
      <div className="ml-[15px] flex h-[50px] w-[50px] flex-col items-center justify-end rounded-[6px] border border-[#3a3732] bg-[#32302b]"><div className="h-1 w-5 rounded-full bg-[#dc9ee6]" /></div>
      <div className="ml-4 flex h-[50px] w-7 flex-col items-center">
        <svg className="mt-[10px]" width="28" height="28" viewBox="0 0 28 28"><circle cx="14" cy="14" r="14" fill="#f8f8f8" /><path d="M14 5c3.500 4 4.500 6.500 4.300 9.500-.2 2.800-1.800 5-3.800 6.500V24h-1v-3c-2-1.500-3.600-3.700-3.800-6.500C9.500 11.500 10.500 9 14 5z" fill="#0b7150" /><path d="M14 5v19" stroke="#0a5039" strokeWidth=".8" /></svg>
        <div className="mt-[7px] h-1 w-2 rounded-full bg-[#9d9a96]" />
      </div>

      <svg className="-mt-[2px] ml-[236px]" width="15" height="9" viewBox="0 0 15 9" fill="none" stroke="#fff" strokeWidth="2"><path d="M1 7.800l6.500-6 6.500 6" /></svg>
      <svg className="-mt-px ml-[22px]" width="20" height="20" viewBox="0 0 20 20" fill="none" stroke="#f4f4f4" strokeWidth="1.300">
        <path d="M.8 10.500C.8 5 4.800 1 9.800 1c3.200 0 6.200 1.600 8 4.300M18.800 0v5.500H13M8.500 19C5.500 18.600 3 17 1.700 14.700M1.200 20v-5.500H7" />
        <circle cx="15" cy="15" r="5" fill="#ff9e0b" stroke="none" />
      </svg>
      <div className="ml-[23px]"><MicIcon color="#d9a0e0" width={14} height={20} /></div>
      <svg className="-mt-px ml-[22px]" width="20" height="16" viewBox="0 0 20 16" fill="none" stroke="#fff" strokeWidth="1.600"><path d="M.6 5.800a13.300 13.300 0 0 1 18.800 0M3.500 8.700a9.200 9.200 0 0 1 13 0M6.300 11.500a5.300 5.300 0 0 1 7.400 0" /><circle cx="10" cy="14" r="1.900" fill="#fff" stroke="none" /></svg>
      <svg className="-mt-px ml-[10px]" width="21" height="18" viewBox="0 0 21 18" fill="none" stroke="#fff" strokeWidth="1.400"><path d="M.8 6.200h3L8.500 2v14l-4.700-4.200h-3zM11.500 6.300c1.200 1.600 1.200 3.800 0 5.400M14.200 4c2.200 3 2.200 7 0 10M17 1.500c3.500 4.500 3.500 10.500 0 15" /></svg>
      <svg className="-mt-[2px] ml-[9px]" width="21" height="17" viewBox="0 0 21 17"><path d="M8 3.200h7.500c1.200 0 2 .8 2 2v7.600c0 1.200-.8 2-2 2h-12c-1.200 0-2-.8-2-2V10" fill="none" stroke="#fff" strokeWidth="1.500" /><path d="M6.500 5.300h5.500v7.600H4L6.800 9zM18 6.500h1.400c.6 0 1 .4 1 1v3c0 .6-.4 1-1 1H18z" fill="#fff" /><path d="M3.500 0L0 6.500h2.200L1 11.500 6.800 4.200H4.500L6 0z" fill="#fff" /></svg>
      <div className="-mt-[3px] ml-auto mr-[12px] text-right leading-5 whitespace-nowrap">
        <div className="tracking-[-0.35px]">4:03 PM</div>
        <div className="tracking-[-0.2px]">10/15/2024</div>
      </div>
      <svg className="mr-[25px]" width="18" height="20" viewBox="0 0 18 20">
        <path d="M2 8c0-4 2.700-6.500 6.200-6.500S15 4 15 8v5l1.200 2H.3L2 13z" fill="#fff" /><path d="M5.500 17h5.500c-.5 1.700-1.500 2.500-2.800 2.500S6 18.700 5.500 17z" fill="#fff" />
        <path d="M6 6.200h4.500L6 11.300h4.500" fill="none" stroke="#28201e" strokeWidth="1.500" /><path d="M12 1.500h4.500L13 6h4" fill="none" stroke="#28201e" strokeWidth="3" /><path d="M12 1.500h4.500L13 6h4" fill="none" stroke="#fff" strokeWidth="1.300" />
      </svg>
    </footer>
  );
}

export default function App() {
  return (
    <div className="relative h-[1080px] w-[1920px] overflow-hidden font-['Liberation_Sans',Arial,sans-serif]">
      <TabStrip />
      <Toolbar />
      <Page />
      <Taskbar />
      <Recorder />
      <DragTimer />
    </div>
  );
}
